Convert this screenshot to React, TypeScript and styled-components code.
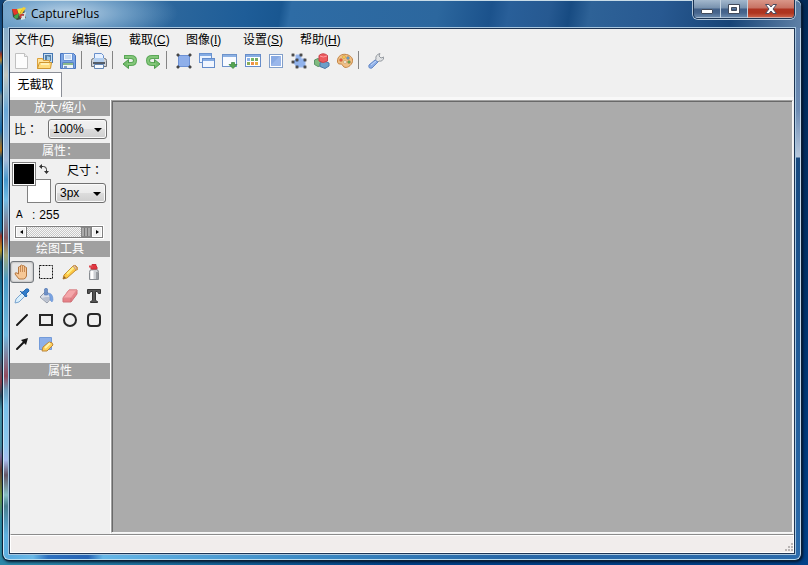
import React from "react";
import styled, { createGlobalStyle, css } from "styled-components";

const GlobalStyle = createGlobalStyle`
  * { box-sizing: border-box; }
  html, body, #root { height: 100%; margin: 0; }
  body {
    overflow: hidden;
    font: 12px/16px "Liberation Sans", "Noto Sans CJK SC", sans-serif;
    color: #000;
  }
  button, select, input { font: inherit; color: inherit; margin: 0; }
`;

const Desktop = styled.div`
  display: flex;
  height: 100%;
  padding: 0 6px 4px 2px;
  background:
    linear-gradient(90deg, #2c87a8 0, #2c87a8 30px, transparent 400px) 0 100% / 100% 6px no-repeat,
    linear-gradient(180deg, #144678 0, #1b5d97 50px, #a33527 54px, #c08a28 60px, #1b6fae 66px, #1874b8 90px, #7c8f96 96px, #1874b8 130px, #c27812 150px, #185a8a 158px, #1e7db4 172px, #1c7cae 230px, #a4352a 236px, #c59d1d 250px, #17597b 262px, #1a85ae 300px, #27819c 350px, #92404d 382px, #2b5164 396px, #459ab0 410px, #4995a8 446px, #7b6b9c 456px, #6c4335 470px, #6d9d41 496px, #2e8ea6 520px) 0 0 / 10px 100% no-repeat,
    linear-gradient(180deg, #022a58, #013269 50%, #014188);
`;

const Frame = styled.div`
  display: flex;
  flex: 1;
  flex-direction: column;
  min-width: 0;
  padding: 0 6px 6px;
  border: 1px solid #0b1f35;
  border-top: 0;
  border-radius: 6px 6px 7px 7px;
  box-shadow: inset 1px 0 #c9e6f6, inset -1px 0 #c2d7ea, inset 0 -1px #b9dcef, inset 0 1px #c8dce8, 1px 1px 3px #001026;
  background:
    linear-gradient(180deg, #6587b2 0, #5f7fa9 55px, #6d8cb4 110px, #b7c8dc 157px, #17497f 158px, #1d5692 300px, #2b6bab 100%) 100% 0 / 7px 100% no-repeat,
    linear-gradient(180deg, #74a3c9 0, #9eb7c8 60px, #c1c6bf 75px, #6aa8d8 110px, #a5bad8 160px, #4697cd 180px, #72bce5 200px, #8b5b62 238px, #a5a877 255px, #4a9bc6 280px, #70b9df 335px, #934b5e 376px, #6f9dbb 390px, #79c1ea 405px, #8dc9ee 445px, #a9bdf0 460px, #665766 475px, #85bfc4 495px, #4a7f90 506px, #5eb0e0 535px) 0 0 / 7px 100% no-repeat,
    linear-gradient(90deg, #57a9df 0, #69b8e6 30px, #2d71c0 45px, #2664b4 85px, #65b6e6 100px, #3c8bc5 300px, #2868a7 500px, #2b6bab 100%) 0 100% / 100% 7px no-repeat,
    #235d98;
`;

const TitleBar = styled.header`
  display: flex;
  flex: 0 0 28px;
  gap: 4px;
  margin: 0 -6px;
  padding: 0 6px 0 8px;
  border-top: 1px solid #c8dce8;
  border-radius: 6px 6px 0 0;
  background:
    radial-gradient(ellipse 110px 30px at 65px 12px, rgba(205, 224, 240, .85) 0, rgba(150, 188, 219, .6) 50%, transparent 100%),
    linear-gradient(100deg, #538dbc 0, #2b669c 170px, #1e5d98 240px, #195791 275px, #2e6ca5 285px, #2c679e 430px, #1b528c 482px, #295f99 500px, #265991 540px, #174b82 560px, #2e6297 580px, #285991 650px, #174477 720px, #6989ad 800px);
`;

const AppIcon = styled.svg`
  flex: none;
  width: 16px;
  height: 16px;
  margin-top: 5px;
`;

const Title = styled.h1`
  flex: 1;
  margin: 5px 0 0;
  font: 12px/16px "Open Sans", sans-serif;
`;

const WindowControls = styled.div`
  display: flex;
  height: 19px;
  margin-top: -1px;
  border: 1px solid #1b3352;
  border-top: 0;
  border-radius: 0 0 5px 5px;
  box-shadow: 0 0 0 1px #b2c6d9;
  overflow: hidden;
`;

const ControlButton = styled.button<{ $close?: boolean }>`
  display: flex;
  align-items: center;
  justify-content: center;
  width: ${p => (p.$close ? 46 : 27)}px;
  padding: 0;
  border: 0;
  border-right: ${p => (p.$close ? "0" : "1px solid #c3d2e0")};
  background: ${p => p.$close
    ? "linear-gradient(#d99789 0, #c77263 8px, #ae3422 9px, #ae351f 13px, #d4745b 19px)"
    : "linear-gradient(#a3b8cd 0, #7791ae 8px, #415f87 9px, #48668e 13px, #7897b8 19px)"};
  box-shadow: inset 0 -1px rgba(220, 232, 242, .55);
`;

const Client = styled.main`
  display: flex;
  flex: 1;
  flex-direction: column;
  min-height: 0;
  border: 1px solid #1d3453;
  outline: 1px solid #a7c6df;
  background: #f0f0f0;
`;

const MenuBar = styled.nav`
  display: flex;
  height: 21px;
  padding-left: 5px;
`;

const MenuButton = styled.button`
  width: 57px;
  padding: 1px 0 0;
  border: 0;
  background: none;
  text-align: left;
  line-height: 18px;
  white-space: nowrap;
`;

const Toolbar = styled.div`
  display: flex;
  height: 22px;
`;

const IconButton = styled.button<{ $tool?: boolean; $pressed?: boolean }>`
  display: flex;
  align-items: center;
  justify-content: center;
  width: ${p => (p.$tool ? 24 : 23)}px;
  height: ${p => (p.$tool ? 24 : 22)}px;
  padding: 0;
  border: 1px solid transparent;
  border-radius: 3px;
  background: none;
  ${p => p.$pressed && css`
    height: 22px;
    margin-top: 1px;
    border-color: #72777c;
    background: #e5e5e5;
    box-shadow: inset 0 0 2px #888;
  `}
`;

const Separator = styled.span`
  width: 8px;
  height: 18px;
  margin-top: 1px;
  background: linear-gradient(#858585, #858585) 2px 0 / 1px 100% no-repeat;
`;

const TabStrip = styled.div`
  display: flex;
  align-items: flex-start;
  height: 28px;
  border-bottom: 3px solid #f8f8f8;
`;

const Tab = styled.button`
  width: 52px;
  height: 25px;
  padding: 0;
  border: 1px solid #8b8e96;
  border-width: 1px 1px 0 0;
  background: #fff;
  line-height: 22px;
`;

const Workspace = styled.div`
  display: flex;
  flex: 1;
  min-height: 0;
`;

const Sidebar = styled.aside`
  flex: 0 0 101px;
  border-right: 1px solid #fff;
`;

const Canvas = styled.section`
  flex: 1;
  margin: 0 1px 1px 0;
  border: 2px solid;
  border-color: #a0a0a0 #f7f7f7 #f7f7f7 #a0a0a0;
  border-width: 1px;
  box-shadow: inset 1px 1px #696969;
  background: #ababab;
`;

const Heading = styled.h2`
  height: 16px;
  margin: 0;
  background: #a0a0a0;
  color: #fff;
  font: 12px/16px "Liberation Sans", "Noto Sans CJK SC", sans-serif;
  text-align: center;
`;

const FieldLabel = styled.label<{ $indent?: boolean }>`
  padding-left: ${p => (p.$indent ? 12 : 0)}px;
  font-family: "Noto Sans CJK TC", sans-serif;
  white-space: nowrap;
`;

const ZoomRow = styled.div`
  display: flex;
  align-items: center;
  justify-content: space-between;
  height: 27px;
  padding: 3px 3px 4px 4px;
`;

const SelectBox = styled.select<{ $wide?: boolean }>`
  appearance: none;
  width: ${p => (p.$wide ? 59 : 51)}px;
  height: 20px;
  padding: 0 0 0 4px;
  border: 1px solid #707070;
  border-radius: 3px;
  box-shadow: inset 0 0 0 1px #fafafa;
  background:
    url("data:image/svg+xml,%3Csvg xmlns='http://www.w3.org/2000/svg' width='8' height='4'%3E%3Cpath d='M0 0h8L4 4z'/%3E%3C/svg%3E") right 4px top 8px no-repeat,
    linear-gradient(#f2f2f2 0, #ebebeb 50%, #dddddd 50%, #cfcfcf 100%);
  line-height: 18px;
`;

const Properties = styled.div`
  height: 82px;
  padding: 3px 3px 0 2px;
`;

const ColorRow = styled.div`
  display: flex;
  justify-content: space-between;
  height: 45px;
`;

const Swatches = styled.div`
  position: relative;
  width: 40px;
  height: 42px;
`;

const Swatch = styled.button<{ $front?: boolean }>`
  position: absolute;
  top: ${p => (p.$front ? 0 : 17)}px;
  left: ${p => (p.$front ? 0 : 15)}px;
  z-index: ${p => (p.$front ? 1 : 0)};
  width: 24px;
  height: 24px;
  padding: 0;
  border: 1px solid #808080;
  box-shadow: inset 0 0 0 1px #fff;
  background: ${p => (p.$front ? "#000" : "#fff")};
`;

const SwapButton = styled.button`
  position: absolute;
  top: 1px;
  left: 26px;
  width: 12px;
  height: 12px;
  padding: 0;
  border: 0;
  background: none;
  svg { display: block; }
`;

const SizeField = styled.div`
  display: flex;
  flex-direction: column;
  gap: 5px;
  width: 52px;
`;

const AlphaLabel = styled.label`
  display: flex;
  gap: 4px;
  height: 19px;
  padding-left: 4px;
  small { width: 12px; font-size: 10px; }
`;

const ScrollControl = styled.div`
  display: flex;
  width: 88px;
  height: 12px;
  margin-left: 3px;
  border: 1px solid #808080;
  box-shadow: 0 0 0 1px #fff;
`;

const ScrollArrow = styled.button`
  display: flex;
  align-items: center;
  justify-content: center;
  flex: 0 0 10px;
  padding: 0;
  border: 1px solid #fff;
  background: #f0f0f0;
`;

const AlphaSlider = styled.input`
  appearance: none;
  flex: 1;
  min-width: 0;
  height: 10px;
  border: solid #808080;
  border-width: 0 1px;
  background: repeating-conic-gradient(#c9c9c9 0 25%, #f7f7f7 0 50%) 0 0 / 2px 2px;
  &::-webkit-slider-thumb {
    appearance: none;
    width: 10px;
    height: 10px;
    border: 1px solid #888;
    background: linear-gradient(90deg, transparent 2px, #777 2px 3px, transparent 3px 5px, #777 5px 6px, transparent 6px), #aaa;
  }
`;

const ToolGrid = styled.div`
  display: grid;
  grid-template-columns: repeat(4, 24px);
  grid-auto-rows: 24px;
  height: 106px;
  padding-top: 3px;
`;

const StatusBar = styled.footer`
  display: flex;
  align-items: flex-end;
  justify-content: flex-end;
  flex: 0 0 19px;
  padding: 0 0 1px;
  border: 1px solid #fff;
  border-top: 1px solid #8c8c8c;
  box-shadow: inset 0 1px #fff;
  background: #f1edec;
`;

const icons: Record<string, React.ReactNode> = {
  new: <><path d="M1.500 .5h9l3 3v12h-12z" fill="#fcfcfc" stroke="#c0c0c0" /><path d="M10.500 .5v3h3" fill="#eee" stroke="#c0c0c0" /></>,
  open: <><rect x="6.500" y=".5" width="9" height="9" fill="#c4dcf4" stroke="#4476b1" /><path d="M8 2h6v6H8z" fill="#557fa7" /><path d="M10 8V3l3 1v4" fill="#9cc8e8" /><path d="M.5 5.500h5l1 2h6v8H.5z" fill="#ffe49c" stroke="#dba03b" /><path d="M2.500 9.500h12l-1 6H.5z" fill="#ffdc7d" stroke="#cf9631" /><path d="M4 11h8" stroke="#fff0b5" strokeWidth="2" /></>,
  save: <><path d="M.5.5h13l2 2v13h-15z" fill="#7ba5e6" stroke="#4673bd" /><path d="M3.500.5h9v7h-9z" fill="#eef6ff" stroke="#6690d0" /><path d="M5 3h6M5 5h6" stroke="#a5c1e9" /><path d="M2.500 9.500h11v6h-11z" fill="#eef4f9" stroke="#5a83c5" /><path d="M3 10h10v2H3z" fill="#8bb98b" /><path d="M4 13h3v2H4z" fill="#7f9dc8" /></>,
  print: <><path d="M3.500 7V.5h7l2 2V7" fill="#e7f1ff" stroke="#688fcb" /><path d="M.5 7.500q0-2 2-2h11q2 0 2 2v6h-15z" fill="#d0d3d7" stroke="#70757c" /><path d="M3 5h10v4H3z" fill="#b3cff0" /><path d="M2 10h12" stroke="#555e69" strokeWidth="2" /><path d="M3.500 11.500h9v4h-9z" fill="#f6faff" stroke="#6386b5" /></>,
  undo: <><path d="M2 4h7q4 0 4 3.500T9 11H6" fill="none" stroke="#5aa757" strokeWidth="4" /><path d="M6.500 6.500v9L1 11z" fill="#73bd6b" stroke="#4d9c4b" /><path d="M3 4h6q4 0 4 3.500T9 11H5" fill="none" stroke="#84c77a" strokeWidth="2" /></>,
  crop: <><path d="M2.500 2.500h11v11h-11z" fill="#8eafea" stroke="#6c91d5" />{["1 1", "13 1", "1 13", "13 13"].map(v => <path key={v} d={`M${v}h2v2h-2z`} fill="#777" stroke="#222" strokeWidth=".7" />)}</>,
  windows: <><rect x=".5" y=".5" width="12" height="9" fill="#eaf3ff" stroke="#6992cf" /><path d="M1 2h11" stroke="#83abe3" strokeWidth="2" /><rect x="3.500" y="5.500" width="12" height="9" fill="#f1f6ff" stroke="#648ccb" /><path d="M4 7h11" stroke="#83abe3" strokeWidth="2" /></>,
  download: <><rect x=".5" y="1.500" width="14" height="12" fill="#f9fbff" stroke="#6d93cb" /><path d="M1 3h13" stroke="#8db1e3" strokeWidth="2" /><path d="M9.500 9.500h3v2h2.500L11 15.500 7 11.500h2.500z" fill="#56a64f" stroke="#32813b" strokeWidth=".7" /></>,
  grid: <><rect x=".5" y="1.500" width="15" height="12" fill="#fff" stroke="#678dc9" /><path d="M1 3h14" stroke="#86ace2" strokeWidth="2" />{[[2,5,"#8db4ea"],[6,5,"#73b567"],[10,5,"#75aa68"],[2,9,"#8aae59"],[6,9,"#f19046"],[10,9,"#e9ae43"]].map(([x,y,f]) => <rect key={`${x}-${y}`} x={x} y={y} width="3" height="3" fill={String(f)} />)}</>,
  screen: <><rect x="1.500" y="1.500" width="13" height="13" fill="#fff" stroke="#829fc9" /><rect x="3" y="3" width="10" height="10" fill="#89aae3" /><path d="M3 12 12 3h1v10H3z" fill="#9ab7eb" /></>,
  polygon: <><path d="M2 9 5 6V2h5v4h4v8H6z" fill="#91b3ec" stroke="#9dbaf0" />{[[1,1],[9,1],[1,8],[5,6],[13,6],[5,13],[13,13]].map(([x,y]) => <rect key={`${x}-${y}`} x={x} y={y} width="2" height="2" fill="#888" stroke="#222" strokeWidth=".7" />)}</>,
  blocks: <><path d="M.5 7 4 5.500l4 2v5l-4 1-3.500-2z" fill="#80ba7e" stroke="#5b9469" /><path d="m6 10 4-2 5 2v3l-4 2.500-5-2z" fill="#6c9fc9" stroke="#4a77a6" /><path d="M5 2.500q4-3.500 8.500 0V8Q9 11 5 8z" fill="#ed5b5e" stroke="#c8424a" /><path d="M6 3q3 2 7 0" fill="none" stroke="#ff9ba0" /></>,
  palette: <><path d="M.5 8C.5 3 5 .5 9.500 1.500S17 6 15 10s-7 6-9 3c-1-2-1-2-3-2C1 11 .5 10 .5 8z" fill="#f0bf85" stroke="#c38443" />{[[4,7,"#ed543b"],[7,4,"#ffd34c"],[11,5,"#579fd8"],[12,9,"#60a64b"],[8,9,"#f4efe1"]].map(([x,y,f]) => <circle key={`${x}-${y}`} cx={x} cy={y} r="1.500" fill={String(f)} stroke="#a97a47" strokeWidth=".4" />)}</>,
  wrench: <><path d="M8 6Q7 2 12 .5L11 3l2 2 3-1q-1 5-5 4L9 10 7 8z" fill="#e1e3e5" stroke="#959aa0" /><path d="m1 12 6-5 3 2-6 6q-4 1-3-3z" fill="#8daee5" stroke="#6488c6" /><path d="m3 12 5-4" stroke="#c4d9fc" /></>,
  hand: <><path d="M5 15 1 10q0-2 2-1l1.500 1V3q1-1 2 0V1.500q1-1 2 0V2q1-1 2 0v1.500q1-1 2 0V12q-1 3-3 3z" fill="#f6c795" stroke="#b5773f" /><path d="M6.500 3v5M8.500 2v6M10.500 3v5" stroke="#c98b54" /></>,
  select: <rect x="1.500" y="1.500" width="13" height="13" fill="none" stroke="#111" strokeDasharray="2 1" />,
  pencil: <><path d="m1 15 1-4L11 2q2-2 4 1t-1 3l-9 8z" fill="#ffc944" stroke="#c18b31" /><path d="M5 10 12 3" stroke="#fff087" strokeWidth="2" /><path d="m1 15 3-1-2-2z" fill="#8b622e" /><path d="m11 2 3 4 1-2-3-3z" fill="#eac4a0" stroke="#c99a6e" /></>,
  spray: <><path d="M3.500 8.500q0-3 2-3h5q2 0 2 3v7h-9z" fill="#cdd0d4" stroke="#888c91" /><path d="M6 7v8" stroke="#fff" strokeWidth="3" /><path d="M11 8v7" stroke="#999da2" strokeWidth="2" /><path d="M5 5V3l1-1V.5h4V2l1 1v2z" fill="#e6353e" stroke="#c6303a" /><path d="M3 2.500h4" stroke="#dd4b52" strokeWidth="2" /></>,
  dropper: <><path d="m1 15 1-4 6-6 3 3-6 6z" fill="#d9effc" stroke="#7aa4ce" /><path d="m7 4 2 0 3-3q3-1 3 2l-3 3 1 2-1 1-6-6z" fill="#327dcb" stroke="#2469b0" /></>,
  bucket: <><path d="m2 9 6-6 6 6-5 6z" fill="#dce0e8" stroke="#9098a7" /><path d="m4 10 5 4 5-5-6 0z" fill="#b9c1d0" /><path d="M10 5q5 0 5 7l-1 2-2-2V9z" fill="#7aa3e2" stroke="#6690d0" strokeWidth=".6" /><path d="M6.500 1q2-2 3 0v6h-3z" fill="#6f91c7" stroke="#5277b1" strokeWidth=".6" /></>,
  eraser: <><path d="M1 10 7 2h8v4l-6 8H1z" fill="#e78288" stroke="#cf7278" /><path d="m1 10 6-8h8l-6 8z" fill="#f5a6a9" stroke="#df8b8f" /><path d="M9 10v4" stroke="#cf7278" /></>,
  text: <path d="M1.500 1.500h13v4h-2l-1-2h-2v9l2 1v1h-7v-1l2-1v-9h-2l-1 2h-2z" fill="#545454" stroke="#353535" />,
  line: <path d="M3 13 13 3" stroke="#171717" strokeWidth="2" strokeLinecap="round" />,
  rect: <rect x="2" y="3" width="12" height="10" fill="none" stroke="#282828" strokeWidth="2" />,
  circle: <circle cx="8" cy="8" r="6" fill="none" stroke="#282828" strokeWidth="2" />,
  rounded: <rect x="2" y="2" width="12" height="12" rx="3" fill="none" stroke="#282828" strokeWidth="2" />,
  arrow: <><path d="M3 13 10 6" stroke="#171717" strokeWidth="2" strokeLinecap="round" /><path d="M7 4 14 2l-2 7z" fill="#171717" /></>,
  edit: <><path d="M1.500 1.500h12v12h-12z" fill="#8eb0e9" stroke="#739bd9" /><path d="m4 15 1-4 6-5q4 0 4 3l-6 6z" fill="#ffd05a" stroke="#ba843a" /><path d="m7 12 5-5" stroke="#fff4ad" strokeWidth="2" /></>,
};

function Icon({ name, flip = false }: { name: string; flip?: boolean }) {
  return (
    <svg width="16" height="16" viewBox="0 0 16 16" aria-hidden="true">
      <g transform={flip ? "matrix(-1 0 0 1 16 0)" : undefined}>{icons[name]}</g>
    </svg>
  );
}

const menus = [["文件", "F"], ["编辑", "E"], ["截取", "C"], ["图像", "I"], ["设置", "S"], ["帮助", "H"]];
const toolbar = ["new", "open", "save", "|", "print", "|", "undo", "redo", "|", "crop", "windows", "download", "grid", "screen", "polygon", "blocks", "palette", "|", "wrench"];
const tools = ["hand", "select", "pencil", "spray", "dropper", "bucket", "eraser", "text", "line", "rect", "circle", "rounded", "arrow", "edit"];

export default function App() {
  const [tool, setTool] = React.useState("hand");
  const [alpha, setAlpha] = React.useState(255);
  return (
    <>
      <GlobalStyle />
      <Desktop>
        <Frame>
          <TitleBar>
            <AppIcon viewBox="0 0 16 16" aria-hidden="true">
              <path d="M1 3h12l2 9-9 2-4-3z" fill="#3d4c40" />
              <path d="M1 3h5l1 5-4 1z" fill="#e53728" />
              <path d="m6 3 6-1-4 7z" fill="#f4e33c" />
              <path d="m3 10 5-3-1 5-3 1z" fill="#44a54b" />
              <path d="m12 1 3 1-5 7-2 1z" fill="#f6cf30" />
              <path d="m10 8 5-2-1 7-4 1z" fill="#d5e5e7" />
              <path d="M10 12q-2-4 3-3" fill="none" stroke="#bd403c" strokeWidth="2" />
            </AppIcon>
            <Title>CapturePlus</Title>
            <WindowControls>
              <ControlButton aria-label="最小化">
                <svg width="14" height="18"><rect x="1.500" y="9.500" width="11" height="4" rx=".5" fill="#fff" stroke="#424b5c" /></svg>
              </ControlButton>
              <ControlButton aria-label="最大化">
                <svg width="14" height="18"><path d="M1.500 4.500h11v9h-11z M4.500 7.500h5v3h-5z" fill="#fff" fillRule="evenodd" stroke="#424b5c" /></svg>
              </ControlButton>
              <ControlButton aria-label="关闭" $close>
                <svg width="14" height="18"><path d="M1.500 4.500h3.500l2 2.500 2-2.500h3.500l-3.500 4.500 3.500 4.500H9l-2-2.500-2 2.500H1.500L5 9z" fill="#fff" stroke="#4b4c60" /></svg>
              </ControlButton>
            </WindowControls>
          </TitleBar>
          <Client>
            <MenuBar>
              {menus.map(([label, key]) => <MenuButton key={key}>{label}(<u>{key}</u>)</MenuButton>)}
            </MenuBar>
            <Toolbar role="toolbar">
              {toolbar.map((name, i) => name === "|"
                ? <Separator key={i} />
                : <IconButton key={name} aria-label={name}><Icon name={name === "redo" ? "undo" : name} flip={name === "redo"} /></IconButton>)}
            </Toolbar>
            <TabStrip role="tablist"><Tab role="tab" aria-selected="true">无截取</Tab></TabStrip>
            <Workspace>
              <Sidebar>
                <Heading>放大/缩小</Heading>
                <ZoomRow>
                  <FieldLabel htmlFor="zoom">比：</FieldLabel>
                  <SelectBox id="zoom" $wide><option>100%</option></SelectBox>
                </ZoomRow>
                <Heading>属性：</Heading>
                <Properties>
                  <ColorRow>
                    <Swatches>
                      <Swatch $front aria-label="前景色" />
                      <Swatch aria-label="背景色" />
                      <SwapButton aria-label="交换颜色">
                        <svg width="12" height="12" viewBox="0 0 12 12"><path d="M2 3.500h3.500q3 0 3 3V9" fill="none" stroke="#333" /><path d="M4 1v5L1 3.500zM6 8h5l-2.500 3z" fill="#333" /></svg>
                      </SwapButton>
                    </Swatches>
                    <SizeField>
                      <FieldLabel htmlFor="size" $indent>尺寸：</FieldLabel>
                      <SelectBox id="size"><option>3px</option></SelectBox>
                    </SizeField>
                  </ColorRow>
                  <AlphaLabel htmlFor="alpha"><small>A</small><span>:</span><span>{alpha}</span></AlphaLabel>
                  <ScrollControl>
                    <ScrollArrow aria-label="减少" onClick={() => setAlpha(Math.max(0, alpha - 1))}><svg width="3" height="4"><path d="M3 0v4L0 2z" /></svg></ScrollArrow>
                    <AlphaSlider id="alpha" type="range" min="0" max="255" value={alpha} onChange={e => setAlpha(Number(e.target.value))} />
                    <ScrollArrow aria-label="增加" onClick={() => setAlpha(Math.min(255, alpha + 1))}><svg width="3" height="4"><path d="M0 0v4l3-2z" /></svg></ScrollArrow>
                  </ScrollControl>
                </Properties>
                <Heading>绘图工具</Heading>
                <ToolGrid>
                  {tools.map(name => <IconButton key={name} $tool $pressed={tool === name} aria-label={name} aria-pressed={tool === name} onClick={() => setTool(name)}><Icon name={name} /></IconButton>)}
                </ToolGrid>
                <Heading>属性</Heading>
              </Sidebar>
              <Canvas aria-label="画布" />
            </Workspace>
            <StatusBar>
              <svg width="8" height="8" aria-hidden="true"><path d="M6 0h2v2H6zM3 3h2v2H3zM6 3h2v2H6zM0 6h2v2H0zM3 6h2v2H3zM6 6h2v2H6z" fill="#b9b5b4" /></svg>
            </StatusBar>
          </Client>
        </Frame>
      </Desktop>
    </>
  );
}
